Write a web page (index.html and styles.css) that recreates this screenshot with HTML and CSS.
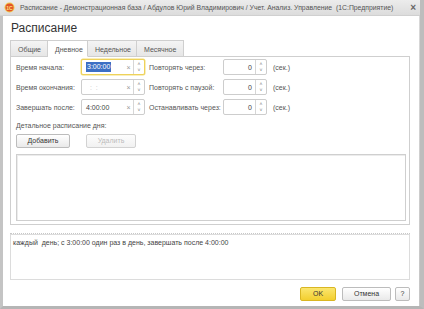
FILE: index.html
```html
<!DOCTYPE html>
<html lang="ru">
<head>
<meta charset="utf-8">
<title>Расписание</title>
<link rel="stylesheet" href="styles.css">
</head>
<body>
<div class="window">
  <div class="titlebar">
    <svg class="logo" width="11" height="11" viewBox="0 0 11 11">
      <circle cx="5.5" cy="5.5" r="5" fill="#f2c94c"/>
      <circle cx="5.5" cy="5.5" r="4" fill="#e2552a"/>
      <text x="5.5" y="7.6" text-anchor="middle" font-family="Liberation Sans" font-size="5" font-weight="bold" fill="#ffe37a">1С</text>
    </svg>
    <span class="title">Расписание - Демонстрационная база / Абдулов Юрий Владимирович / Учет. Анализ. Управление &nbsp;(1С:Предприятие)</span>
    <span class="close">×</span>
  </div>
  <div class="content">
    <h1 class="heading">Расписание</h1>
    <div class="tabs">
      <div class="tab">Общие</div>
      <div class="tab active">Дневное</div>
      <div class="tab">Недельное</div>
      <div class="tab">Месячное</div>
    </div>
    <div class="panel">
      <div class="fields">
        <div class="lbl">Время начала:</div>
        <div class="field time focus"><span class="val"><span class="sel">3:00:00</span></span><span class="clr">×</span><span class="spin"><i>˄</i><i>˅</i></span></div>
        <div class="lbl2">Повторять через:</div>
        <div class="field num"><span class="val">0</span><span class="spin"><i>˄</i><i>˅</i></span></div>
        <div class="unit">(сек.)</div>

        <div class="lbl">Время окончания:</div>
        <div class="field time"><span class="val empty">&nbsp; : &nbsp;:</span><span class="clr">×</span><span class="spin"><i>˄</i><i>˅</i></span></div>
        <div class="lbl2">Повторять с паузой:</div>
        <div class="field num"><span class="val">0</span><span class="spin"><i>˄</i><i>˅</i></span></div>
        <div class="unit">(сек.)</div>

        <div class="lbl">Завершать после:</div>
        <div class="field time"><span class="val">4:00:00</span><span class="clr">×</span><span class="spin"><i>˄</i><i>˅</i></span></div>
        <div class="lbl2">Останавливать через:</div>
        <div class="field num"><span class="val">0</span><span class="spin"><i>˄</i><i>˅</i></span></div>
        <div class="unit">(сек.)</div>
      </div>
      <div class="detail">Детальное расписание дня:</div>
      <div class="btnrow">
        <div class="btn add">Добавить</div>
        <div class="btn del disabled">Удалить</div>
      </div>
      <div class="list"></div>
    </div>
    <div class="sep"></div>
    <div class="summary">каждый &nbsp;день; с 3:00:00 один раз в день, завершать после 4:00:00</div>
    <div class="footer">
      <div class="btn ok">OK</div>
      <div class="btn cancel">Отмена</div>
      <div class="btn help">?</div>
    </div>
  </div>
</div>
</body>
</html>
```

FILE: styles.css
```css
* { box-sizing: border-box; }
html, body { margin: 0; padding: 0; }
body {
  width: 424px;
  height: 309px;
  overflow: hidden;
  background: #b9b9b9;
  font-family: "Liberation Sans", Arial, sans-serif;
  color: #4a4a4a;
}
.window {
  width: 424px;
  height: 309px;
  display: flex;
  flex-direction: column;
  background: linear-gradient(#d9d9d9, #c6c6c6);
  border-left: 3px solid #c4c4c4;
  border-right: 4px solid #bdbdbd;
  border-bottom: 3px solid #b5b5b5;
}
.titlebar {
  height: 16px;
  flex: none;
  display: flex;
  align-items: center;
  background: linear-gradient(#ececec, #dcdcdc);
  margin-left: -3px;
  padding-left: 3px;
  border-bottom: 1px solid #d0d0d0;
}
.logo { margin-left: 1px; margin-right: 5px; flex: none; }
.title {
  font-size: 6.85px;
  color: #555;
  white-space: nowrap;
  flex: 1;
}
.close {
  font-size: 10px;
  color: #666;
  margin-right: 4px;
  font-weight: bold;
}
.content {
  flex: 1;
  background: #fff;
  padding: 0 9px 0 7px;
  display: flex;
  flex-direction: column;
  margin-right: 1px;
}
.heading {
  margin: 0;
  font-weight: normal;
  font-size: 12px;
  color: #333;
  height: 24px;
  line-height: 25px;
  padding-left: 1px;
}
.tabs {
  display: flex;
  height: 17px;
  margin-bottom: -1px;
  position: relative;
  z-index: 1;
}
.tab {
  height: 17px;
  line-height: 17px;
  font-size: 7px;
  color: #555;
  background: linear-gradient(#f4f4f4, #e6e6e6);
  border: 1px solid #cfcfcf;
  border-left: none;
  padding: 0 7px;
}
.tab:first-child { border-left: 1px solid #cfcfcf; width: 38px; }
.tab:nth-child(2) { width: 40px; }
.tab:nth-child(3) { width: 49px; }
.tab:nth-child(4) { width: 47px; }
.tab.active {
  background: #fff;
  border-bottom-color: #fff;
}
.panel {
  border: 1px solid #cfcfcf;
  height: 169px;
  padding: 2px 4px 0 5px;
  display: flex;
  flex-direction: column;
}
.fields {
  display: grid;
  grid-template-columns: 65px 64px 78px 44px auto;
  grid-auto-rows: 16px;
  row-gap: 4px;
  column-gap: 0;
  align-items: center;
  font-size: 7px;
}
.lbl, .lbl2 { color: #555; white-space: nowrap; }
.lbl2 { padding-left: 4px; }
.unit { padding-left: 6px; color: #555; }
.field {
  height: 16px;
  border: 1px solid #cdcdcd;
  border-radius: 2px;
  display: flex;
  align-items: stretch;
  background: #fff;
}
.field.focus { border-color: #eed25a; box-shadow: 0 0 0 0.5px #f3dd7a; }
.val {
  flex: 1;
  display: flex;
  align-items: center;
  padding-left: 4px;
  color: #444;
}
.num .val { justify-content: flex-end; padding-right: 3px; }
.sel { background: #3d6fc4; color: #fff; padding: 0 1px; line-height: 10px; }
.empty { color: #c8c8c8; }
.clr {
  width: 9px;
  display: flex;
  align-items: center;
  justify-content: center;
  color: #999;
  font-size: 7px;
}
.spin {
  width: 11px;
  border-left: 1px solid #d6d6d6;
  display: flex;
  flex-direction: column;
  align-items: center;
  justify-content: center;
}
.spin i {
  font-style: normal;
  font-size: 5px;
  line-height: 6px;
  height: 6px;
  color: #777;
}
.detail {
  font-size: 7px;
  color: #555;
  margin-top: 6px;
  height: 10px;
  line-height: 10px;
}
.btnrow {
  display: flex;
  gap: 16px;
  margin-top: 3px;
}
.btn {
  height: 14px;
  font-size: 7px;
  line-height: 12px;
  text-align: center;
  border: 1px solid #bcbcbc;
  border-radius: 2px;
  background: linear-gradient(#ffffff, #e9e9e9);
  color: #333;
}
.add { width: 54px; }
.del { width: 50px; }
.disabled { color: #bbb; border-color: #d2d2d2; background: linear-gradient(#fdfdfd, #f1f1f1); }
.list {
  margin-top: 6px;
  height: 67px;
  width: 390px;
  border: 1px solid #cfcfcf;
  box-shadow: inset 1px 1px 0 #ececec;
}
.sep {
  margin-top: 8px;
  height: 1px;
  border-top: 1px dotted #c8c8c8;
}
.summary {
  height: 46px;
  border: 1px solid #dcdcdc;
  font-size: 7px;
  color: #444;
  padding: 3px 2px;
  line-height: 10px;
  white-space: pre-wrap;
}
.footer {
  display: flex;
  justify-content: flex-end;
  gap: 6px;
  margin-top: 7px;
}
.ok {
  width: 36px;
  border-color: #d9b623;
  background: linear-gradient(#fbe66f, #f3cf2f);
  color: #333;
}
.cancel { width: 49px; }
.help { width: 15px; margin-left: -2px; }
```
